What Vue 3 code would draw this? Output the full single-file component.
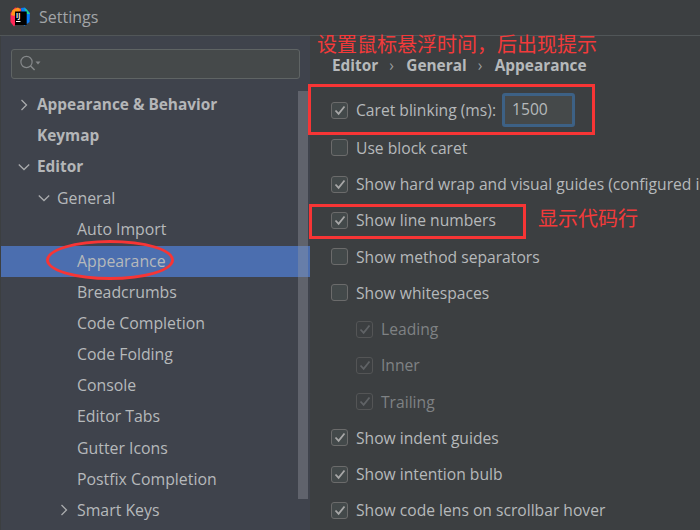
<script setup>
const tree = [
  { label: 'Appearance & Behavior', depth: 0, bold: true, arrow: 'right' },
  { label: 'Keymap', depth: 0, bold: true },
  { label: 'Editor', depth: 0, bold: true, arrow: 'down' },
  { label: 'General', depth: 1, arrow: 'down' },
  { label: 'Auto Import', depth: 2 },
  { label: 'Appearance', depth: 2, selected: true },
  { label: 'Breadcrumbs', depth: 2 },
  { label: 'Code Completion', depth: 2 },
  { label: 'Code Folding', depth: 2 },
  { label: 'Console', depth: 2 },
  { label: 'Editor Tabs', depth: 2 },
  { label: 'Gutter Icons', depth: 2 },
  { label: 'Postfix Completion', depth: 2 },
  { label: 'Smart Keys', depth: 2, arrow: 'right' }
]

const options = [
  { label: 'Use block caret', checked: false },
  { label: 'Show hard wrap and visual guides (configured in Code Style options)', checked: true },
  { label: 'Show line numbers', checked: true },
  { label: 'Show method separators', checked: false },
  { label: 'Show whitespaces', checked: false },
  { label: 'Leading', checked: true, sub: true },
  { label: 'Inner', checked: true, sub: true },
  { label: 'Trailing', checked: true, sub: true },
  { label: 'Show indent guides', checked: true },
  { label: 'Show intention bulb', checked: true },
  { label: 'Show code lens on scrollbar hover', checked: true }
]
</script>

<template>
  <div class="window">
    <header class="titlebar">
      <svg class="logo" width="20" height="20" viewBox="0 0 20 20">
        <path d="M0.5 6 L5 0.5 L11 1.5 L10 12 L4 19.5 L0.5 15 Z" fill="#fe2857" />
        <path d="M2.5 3 L8 0.5 L11 3 L4 9 L1 8 Z" fill="#ff9419" />
        <path d="M11 1 L15 0.5 L20 6 L19.5 15 L14 19 L12 10 Z" fill="#087cfa" />
        <path d="M14 1 L16.5 2.5 L20 7 L17 7 Z" fill="#21d789" />
        <rect x="5" y="4.5" width="11.7" height="13.5" fill="#000" />
        <text x="6" y="10.6" class="logo-text">IJ</text>
        <rect x="6" y="14" width="4.5" height="1" fill="#fff" />
      </svg>
      <span class="title">Settings</span>
    </header>

    <div class="body">
      <aside class="sidebar">
        <div class="search">
          <svg width="24" height="18" viewBox="0 0 24 18">
            <circle cx="7.5" cy="7" r="5.6" fill="none" stroke="#85888a" stroke-width="1.2" />
            <path d="M11.6 11 L15.6 15" stroke="#85888a" stroke-width="1.5" />
            <path d="M16.5 6.5 L21.5 6.5 L19 9.5 Z" fill="#85888a" />
          </svg>
        </div>
        <div class="tree-wrap">
          <ul class="tree">
            <li
              v-for="node in tree"
              :key="node.label"
              class="node"
              :class="['depth-' + node.depth, { bold: node.bold, selected: node.selected }]"
            >
              <svg v-if="node.arrow" class="arrow" width="12" height="12" viewBox="0 0 12 12">
                <path v-if="node.arrow === 'right'" d="M3.5 1 L8.5 6 L3.5 11" />
                <path v-else d="M0.8 3.5 L6 8.5 L11.2 3.5" />
              </svg>
              <span class="node-label">{{ node.label }}</span>
            </li>
          </ul>
          <div class="scrollbar"></div>
        </div>
      </aside>

      <main class="content">
        <nav class="crumbs">
          <span>Editor</span>
          <i>›</i>
          <span>General</span>
          <i>›</i>
          <span>Appearance</span>
        </nav>

        <div class="row first">
          <span class="box">
            <svg width="12" height="11" viewBox="0 0 12 11"><path d="M1.5 5.5 L4.6 8.8 L10.5 1.5" /></svg>
          </span>
          <span class="label">Caret blinking (ms):</span>
          <span class="field">1500</span>
        </div>

        <div v-for="opt in options" :key="opt.label" class="row" :class="{ sub: opt.sub }">
          <span class="box">
            <svg v-if="opt.checked" width="12" height="11" viewBox="0 0 12 11"><path d="M1.5 5.5 L4.6 8.8 L10.5 1.5" /></svg>
          </span>
          <span class="label">{{ opt.label }}</span>
        </div>
      </main>
    </div>

    <div class="note note-hover">设置鼠标悬浮时间，后出现提示</div>
    <div class="note note-lines">显示代码行</div>
    <div class="frame frame-caret"></div>
    <div class="frame frame-lines"></div>
    <div class="ring"></div>
  </div>
</template>

<style scoped>
.window {
  position: relative;
  width: 700px;
  height: 530px;
  overflow: hidden;
  background: #3c3f41;
  font-family: "Open Sans", "Noto Sans", "Noto Sans CJK SC", sans-serif;
  font-size: 15.65px;
  color: #b6b9bb;
}

.titlebar {
  display: flex;
  align-items: center;
  gap: 9px;
  height: 36px;
  padding: 0 0 1px 10px;
  box-sizing: border-box;
  border-bottom: 1px solid #515658;
}

.logo-text {
  font-size: 6.5px;
  font-weight: 700;
  fill: #fff;
}

.title {
  font-size: 16px;
  color: #a2a5a8;
}

.body {
  display: flex;
  height: 494px;
}

.sidebar {
  width: 309px;
  margin-left: 1px;
  background: #3f434c;
  display: flex;
  flex-direction: column;
}

.search {
  display: flex;
  align-items: center;
  height: 28px;
  margin: 13px 10px 0 10px;
  padding-left: 7px;
  background: #45494a;
  border: 1px solid #5f6464;
  border-radius: 3px;
}

.tree-wrap {
  position: relative;
  flex: 1;
}

.tree {
  list-style: none;
  margin: 11px 0 0;
  padding: 0;
  font-size: 15.85px;
}

.node {
  position: relative;
  display: flex;
  align-items: center;
  height: 31.2px;
  white-space: nowrap;
}

.node-label {
  position: relative;
  top: -1px;
}

.node.bold {
  font-size: 15.4px;
  font-weight: 700;
  color: #b4b6b8;
}

.node.selected {
  background: #4b6eaf;
}

.depth-0 { padding-left: 36px; }
.depth-1 { padding-left: 56px; }
.depth-2 { padding-left: 76px; }

.arrow {
  position: absolute;
  margin: -2px 0 0 -19px;
}

.arrow path {
  fill: none;
  stroke: #a9abad;
  stroke-width: 1.3;
}

.scrollbar {
  position: absolute;
  top: 12px;
  right: 2px;
  height: 408px;
  width: 10px;
  background: rgba(150, 153, 160, 0.38);
}

.content {
  flex: 1;
  min-width: 0;
  padding-left: 21px;
}

.crumbs {
  display: flex;
  align-items: center;
  gap: 11px;
  height: 18px;
  margin: 21px 0 0 1px;
  font-size: 15.4px;
  line-height: 18px;
  font-weight: 700;
  white-space: nowrap;
}

.crumbs i {
  width: 6px;
  font-style: normal;
  font-weight: 400;
  color: #9a9c9e;
}

.row {
  display: flex;
  align-items: center;
  height: 36.25px;
  white-space: nowrap;
}

.row.first {
  margin: 17px 0 1.5px;
}

.row.sub {
  padding-left: 25px;
  color: #7f8284;
}

.box {
  flex: none;
  display: flex;
  align-items: center;
  justify-content: center;
  width: 15px;
  height: 15px;
  margin-right: 8px;
  background: #43494a;
  border: 1px solid #6b6b6b;
  border-radius: 3px;
}

.box path {
  fill: none;
  stroke: #a7a7a7;
  stroke-width: 1.8;
}

.sub .box {
  background: #3c3f41;
  border-color: #545556;
}

.sub .box path {
  stroke: #606366;
}

.field {
  width: 60px;
  height: 28px;
  margin-left: 6px;
  padding-left: 7px;
  line-height: 27px;
  background: #45494a;
  border: 3px solid #3d6185;
  border-radius: 3px;
}

.note {
  position: absolute;
  color: #f23a3a;
  font-size: 20px;
  line-height: 20px;
  white-space: nowrap;
}

.note-hover {
  left: 317px;
  top: 35px;
}

.note-lines {
  left: 538px;
  top: 209px;
}

.frame {
  position: absolute;
  box-sizing: border-box;
  border: 3px solid #f73535;
}

.frame-caret {
  left: 308px;
  top: 84px;
  width: 287px;
  height: 51px;
}

.frame-lines {
  left: 309px;
  top: 204px;
  width: 217px;
  height: 35px;
}

.ring {
  position: absolute;
  left: 46px;
  top: 240px;
  width: 128px;
  height: 40px;
  box-sizing: border-box;
  border: 3px solid #f73535;
  border-radius: 50%;
}
</style>
